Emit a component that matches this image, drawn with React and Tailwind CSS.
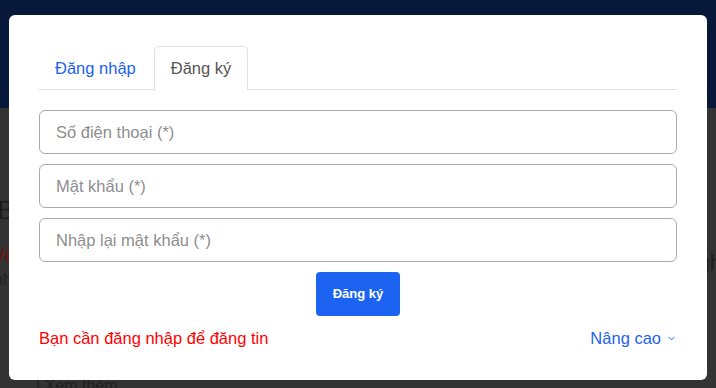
import { ChevronDown } from 'lucide-react';

export default function App() {
  return (
    <div className="relative w-[716px] h-[388px] overflow-hidden bg-[#333333] font-['Liberation_Sans',Arial,sans-serif]">
      {/* page behind the overlay */}
      <div className="h-[108px] bg-[#07183b]" />
      <div className="pt-[88px] text-[#1a1a1a]">
        <div className="text-[28px] font-['Liberation_Serif',serif] leading-none -ml-[4px]">B</div>
        <div className="mt-[20px] text-[#6b1414] font-bold text-[16px] -ml-[6px]">Vi</div>
        <div className="text-[#222] text-[16px] -ml-[6px]">nh</div>
      </div>
      <div className="absolute left-[36px] top-[374px] text-[16px] text-[#1e1e1e]">| Xem thêm</div>
      <div className="absolute right-[-6px] top-[246px] text-[22px] text-[#1e1e1e]">gh</div>

      {/* modal */}
      <div className="absolute left-[9px] top-[15px] w-[698px] h-[365px] bg-white rounded-[6px] px-[30px] pt-[31px]">
        <div className="flex border-b border-[#dee2e6] h-[44px]">
          <button className="pl-[16px] pr-[18px] text-[16.5px] text-[#1d63ea] h-[44px]">Đăng nhập</button>
          <button className="px-[16px] text-[16.5px] text-[#555555] h-[45px] bg-white border border-[#dee2e6] border-b-white rounded-t-[5px] -mb-px">
            Đăng ký
          </button>
        </div>

        <div className="mt-[20px] flex flex-col gap-[10px]">
          <input
            placeholder="Số điện thoại (*)"
            className="h-[44px] w-full rounded-[6px] border border-[#aaaaaa] px-[16px] text-[16.5px] placeholder:text-[#8e8e8e] outline-none"
          />
          <input
            placeholder="Mật khẩu (*)"
            className="h-[44px] w-full rounded-[6px] border border-[#aaaaaa] px-[16px] text-[16.5px] placeholder:text-[#8e8e8e] outline-none"
          />
          <input
            placeholder="Nhập lại mật khẩu (*)"
            className="h-[44px] w-full rounded-[6px] border border-[#aaaaaa] px-[16px] text-[16.5px] placeholder:text-[#8e8e8e] outline-none"
          />
        </div>

        <div className="mt-[10px] flex justify-center">
          <button className="h-[44px] w-[84px] rounded-[4px] bg-[#1c63f1] text-white text-[13px] font-bold">
            Đăng ký
          </button>
        </div>

        <div className="mt-[10px] flex items-center justify-between h-[24px]">
          <span className="text-[16.5px] text-[#ff0000]">Bạn cần đăng nhập để đăng tin</span>
          <button className="flex items-center gap-[5px] text-[16.5px] text-[#1d63ea]">
            Nâng cao
            <ChevronDown size={11} strokeWidth={2} />
          </button>
        </div>
      </div>
    </div>
  );
}
